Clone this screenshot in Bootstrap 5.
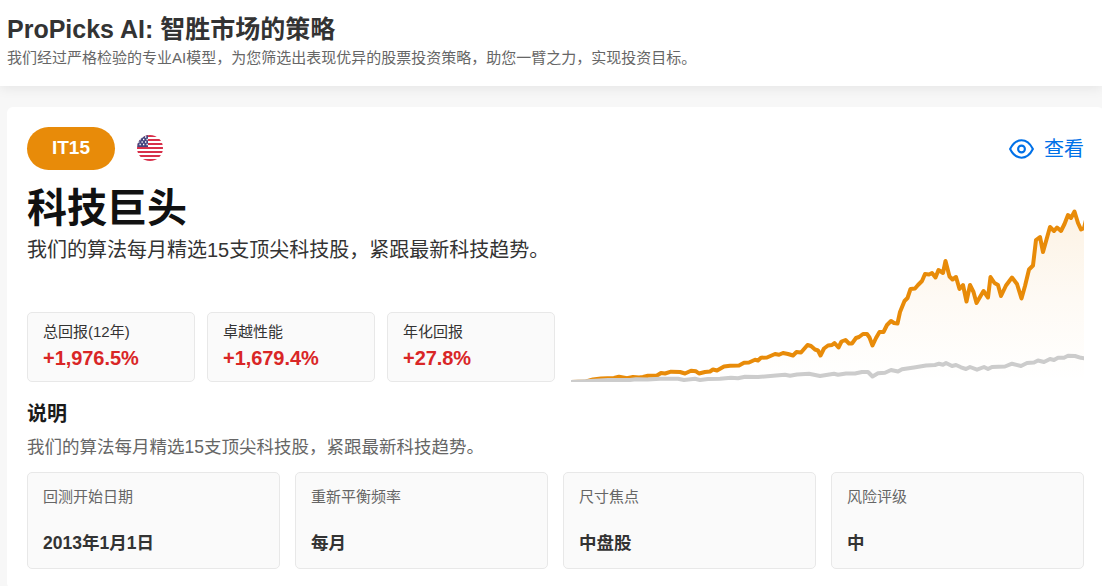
<!DOCTYPE html>
<html lang="zh-CN">
<head>
    <meta charset="UTF-8">
    <meta name="viewport" content="width=device-width, initial-scale=1.0">
    <title>ProPicks AI</title>
    <link rel="stylesheet" href="https://cdn.jsdelivr.net/npm/bootstrap@5.3.0/dist/css/bootstrap.min.css">
    <style>
        body {
            font-family: "Liberation Sans", "Noto Sans CJK SC", sans-serif;
            background: #f7f7f7;
            color: #333;
            overflow: hidden;
        }
        .page-head {
            height: 86px;
            padding: 14px 7px 0;
            box-shadow: 0 2px 12px rgba(0, 0, 0, .08);
        }
        .page-head h1 { font-size: 25px; line-height: 30px; color: #333; }
        .page-head p { font-size: 15px; line-height: 28px; color: #666; }
        .strategy {
            width: 1097px;
            margin: 21px 0 0 7px;
            padding: 20px;
            border-radius: 6px;
        }
        .code-pill {
            width: 88px;
            height: 43px;
            font-size: 19px;
            background: #e88b09;
        }
        .flag { margin: 0 0 2px 22px; }
        .view-link { font-size: 20px; line-height: 30px; color: #0071e8; gap: 10px; }
        .overview { margin-top: 14px; }
        .strategy h2 { font-size: 40px; line-height: 48px; color: #111; }
        .intro { font-size: 20px; line-height: 30px; margin: 3px 0 47px; }
        .stat-list { gap: 12px; }
        .stat-box {
            background: #fafafa;
            border: 1px solid #e8e8e8;
            border-radius: 5px;
            padding: 0 15px;
        }
        .stat-top { width: 168px; height: 70px; padding-top: 7px; }
        .stat-label { font-size: 15px; line-height: 24px; }
        .stat-num { font-size: 20px; line-height: 28px; color: #d92626; letter-spacing: -.05px; }
        .strategy h3 { font-size: 20px; line-height: 30px; margin: 17px 0 4px; color: #1a1a1a; }
        .about { font-size: 17.5px; line-height: 28px; color: #666; }
        .info-row { gap: 15px; margin-top: 11px; }
        .info-box { height: 97px; padding-top: 12px; }
        .info-box .stat-label { color: #666; }
        .info-val { font-size: 17.5px; line-height: 26px; margin-top: 21px; }
    </style>
</head>
<body>
    <header class="page-head bg-white">
        <h1 class="fw-bold mb-0">ProPicks AI: 智胜市场的策略</h1>
        <p class="mb-0">我们经过严格检验的专业AI模型，为您筛选出表现优异的股票投资策略，助您一臂之力，实现投资目标。</p>
    </header>

    <main class="strategy bg-white">
        <div class="d-flex align-items-center">
            <span class="code-pill rounded-pill text-white fw-bold d-flex align-items-center justify-content-center">IT15</span>
            <svg class="flag" width="26" height="26" viewBox="0 0 26 26">
                <clipPath id="round"><circle cx="13" cy="13" r="13"/></clipPath>
                <g clip-path="url(#round)">
                    <rect width="26" height="26" fill="#fff"/>
                    <path d="M0 1h26M0 5h26M0 9h26M0 13h26M0 17h26M0 21h26M0 25h26" stroke="#d8304a" stroke-width="2"/>
                    <rect width="11" height="12" fill="#46467f"/>
                    <path d="M1 2h10M-1 4.5h12M1 7h10M-1 9.5h12" stroke="#fff" stroke-width="1.3" stroke-dasharray="1.3 2.2"/>
                </g>
            </svg>
            <a class="view-link ms-auto d-flex align-items-center text-decoration-none" href="#">
                <svg width="25" height="20" viewBox="0 0 25 20" fill="none" stroke="currentColor" stroke-width="2.1">
                    <path d="M1.1 10Q5.5 1.3 12.5 1.3T23.9 10Q19.5 18.7 12.5 18.7T1.1 10Z" stroke-linejoin="round"/>
                    <circle cx="12.5" cy="10" r="3.4"/>
                </svg>
                <span>查看</span>
            </a>
        </div>

        <div class="overview d-flex justify-content-between">
            <div class="flex-shrink-0">
                <h2 class="fw-bold mb-0">科技巨头</h2>
                <p class="intro">我们的算法每月精选15支顶尖科技股，紧跟最新科技趋势。</p>
                <div class="stat-list d-flex">
                    <div class="stat-box stat-top">
                        <div class="stat-label">总回报(12年)</div>
                        <div class="stat-num fw-bold">+1,976.5%</div>
                    </div>
                    <div class="stat-box stat-top">
                        <div class="stat-label">卓越性能</div>
                        <div class="stat-num fw-bold">+1,679.4%</div>
                    </div>
                    <div class="stat-box stat-top">
                        <div class="stat-label">年化回报</div>
                        <div class="stat-num fw-bold">+27.8%</div>
                    </div>
                </div>
            </div>
            <!-- strategy return against the benchmark -->
            <svg class="align-self-end" width="513" height="182" viewBox="571 200 513 182" fill="none" stroke-width="4" stroke-linejoin="round">
                <defs>
                    <linearGradient id="fade" x1="0" y1="0" x2="0" y2="1">
                        <stop offset="0" stop-color="#e88b09" stop-opacity=".11"/>
                        <stop offset=".5" stop-color="#e88b09" stop-opacity=".045"/>
                        <stop offset="1" stop-color="#e88b09" stop-opacity="0"/>
                    </linearGradient>
                </defs>
                <path id="area" fill="url(#fade)" stroke="none"/>
                <polyline id="gain" stroke="#e88b09" points="571,382 586,381.5 593,379.5 601,378.5 614,378 619,376.7 627,378.3 633,377 639,377.5 643,377 648,375.7 657,375.5 661,373 665,373.5 671,371.7 680,372 685,373.5 691,370.7 696,371.3 699,373.5 705,372 710,371.5 713,369.5 717,370.5 724,366.5 730,365.8 739,365.5 744,362.8 749,362.5 755,359.8 758,360.5 761,357.7 767,357.5 775,354 779,354.8 783,353 788,354 793,355.5 796.5,352 801,352.5 807.5,345 811,346 815,349.5 818,350.5 820.5,355.5 824,348.5 828,345.5 832,345 834.5,343 838.5,347.5 841.5,341.5 845.5,340 849,343.5 852,343.5 856,338 859,337 863,334 867,334 869.5,337.5 872.5,345.5 876,338 879.5,332 883.5,332 887,325 891,321 894,323 897.5,323.5 900,312 904.5,301 907.5,298 910.5,289 915,288.5 918,285 922,281 925,274 929,274.5 932,273 935.5,277.5 938.5,270 943,273 945.5,261 949.5,276.5 952.5,279.5 956,277 959.5,289 963,285 966.5,301.5 970,285 973.5,292 976.5,303 983.5,291 988,297.5 990.5,277 994.5,283 998,285 1001,296 1006,285.5 1012,277.5 1017,284 1021.5,298.5 1025,286 1029,269.5 1033,265.5 1036,240 1040,237 1043,252 1050,227 1054,231 1057,227.5 1061,231 1064.5,224 1068,215 1071,218 1074.5,211.5 1078,223 1081,229.5 1084,228 1086,220"/>
                <polyline stroke="#ccc" points="571,382 586,381.3 608,380 630,380 636,379.3 648,379.5 660,378.7 678,378.7 684,380 695,378.7 700,380 708,379 720,378.7 731,377.7 738,378.3 745,376.7 758,377 776,375.5 785,374.7 790,375.7 797,374.5 809,373.7 820,376 834,373.7 838,374.7 846,373.5 855,373.5 862,372 868,372 872.5,376.5 878,373.3 885,372.7 891,370 898,371.5 902,369.3 914,367.5 926,365.5 935,365 939,363.7 943,364.7 946,363 952,366 956,365 961,367.3 966,369 970,367 977,369.7 984,367 988,369 992,367 1005,366.5 1012,363.7 1021,366 1027,363 1034,362.5 1038,360.5 1044,362 1050,359 1054,360 1058,357.7 1064,357.7 1068,355.8 1075,356 1081,357.8 1086,358.5"/>
            </svg>
        </div>

        <h3 class="fw-bold">说明</h3>
        <p class="about mb-0">我们的算法每月精选15支顶尖科技股，紧跟最新科技趋势。</p>

        <div class="info-row d-flex">
            <div class="stat-box info-box flex-fill w-25">
                <div class="stat-label">回测开始日期</div>
                <div class="info-val fw-bold">2013年1月1日</div>
            </div>
            <div class="stat-box info-box flex-fill w-25">
                <div class="stat-label">重新平衡频率</div>
                <div class="info-val fw-bold">每月</div>
            </div>
            <div class="stat-box info-box flex-fill w-25">
                <div class="stat-label">尺寸焦点</div>
                <div class="info-val fw-bold">中盘股</div>
            </div>
            <div class="stat-box info-box flex-fill w-25">
                <div class="stat-label">风险评级</div>
                <div class="info-val fw-bold">中</div>
            </div>
        </div>
    </main>

    <script src="https://cdn.jsdelivr.net/npm/bootstrap@5.3.0/dist/js/bootstrap.bundle.min.js"></script>
    <script>
        // Close the gain line down to the baseline for the shaded area
        const points = document.getElementById("gain").getAttribute("points");
        document.getElementById("area").setAttribute("d", "M" + points + " L1086,382 571,382Z");
    </script>
</body>
</html>
